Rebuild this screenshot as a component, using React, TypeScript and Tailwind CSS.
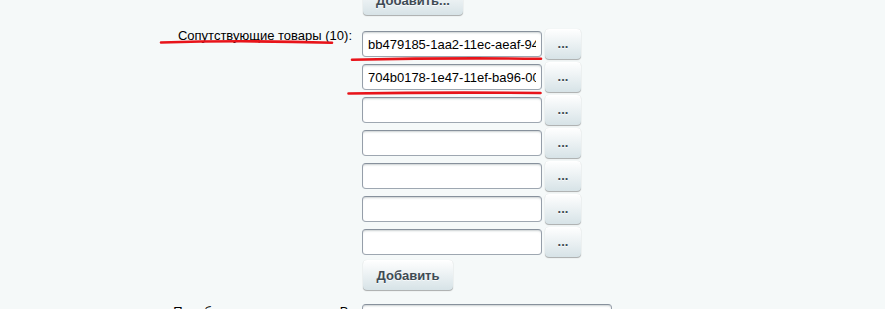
const related = [
  "bb479185-1aa2-11ec-aeaf-9457a55f3d2c",
  "704b0178-1e47-11ef-ba96-00505601a2b3",
  "",
  "",
  "",
  "",
  "",
];

const btn =
  "rounded-[4px] bg-[#e0e9ec] bg-linear-to-b from-white to-[#d7e3e7] font-bold text-[#3f4b54] [text-shadow:0_1px_rgba(255,255,255,0.7)] shadow-[0_0_1px_rgba(0,0,0,0.11),0_1px_1px_rgba(0,0,0,0.3),inset_0_1px_#fff]";

const field =
  "h-[26px] rounded-[4px] border border-[#959ea9] border-t-[#87919c] border-b-[#9ea7b1] bg-white px-[5px] text-[13px] text-black outline-none shadow-[inset_0_2px_2px_-1px_rgba(180,188,191,0.7)]";

export default function App() {
  return (
    <div className="relative h-[309px] overflow-hidden bg-[#f5f9f9] font-['Liberation_Sans',Arial,sans-serif] text-[13px] leading-[15px] text-black">
      <div className="-mt-[15px] flex flex-col">
        {/* previous property */}
        <div className="flex">
          <div className="w-[352px] shrink-0" />
          <div className="ml-[11px]">
            <button className={`${btn} h-[30px] w-[100px]`}>Добавить...</button>
          </div>
        </div>

        {/* related products */}
        <div className="mt-[14px] flex">
          <div className="-mt-[1.5px] w-[352px] shrink-0 text-right">Сопутствующие товары (10):</div>
          <div className="ml-[10px] flex flex-col gap-[3px]">
            {related.map((v, i) => (
              <div key={i} className="flex h-[30px] items-center gap-[3px]">
                <input readOnly value={v} className={`${field} w-[180px]`} />
                <button className={`${btn} h-[30px] w-[36px] leading-[30px]`}>...</button>
              </div>
            ))}
            <button className={`${btn} ml-px h-[30px] w-[90px]`}>Добавить</button>
          </div>
        </div>

        {/* next property */}
        <div className="mt-[12px] flex">
          <div className="mt-[1.5px] w-[352px] shrink-0 text-right">Подобные товары и услуги В:</div>
          <div className="ml-[10px] pt-[2px]">
            <input readOnly value="" className={`${field} w-[250px]`} />
          </div>
        </div>
      </div>

      {/* red marker annotations */}
      <svg className="pointer-events-none absolute inset-0" width="885" height="309">
        <g fill="none" stroke="#e8141a" strokeWidth="2.6" strokeLinecap="round">
          <path d="M161 42.5 Q 245 40 332 42.8" />
          <path d="M352 59.8 Q 450 57.6 541 58.8" />
          <path d="M348.5 93.5 Q 445 92 540.5 93" />
        </g>
      </svg>
    </div>
  );
}
